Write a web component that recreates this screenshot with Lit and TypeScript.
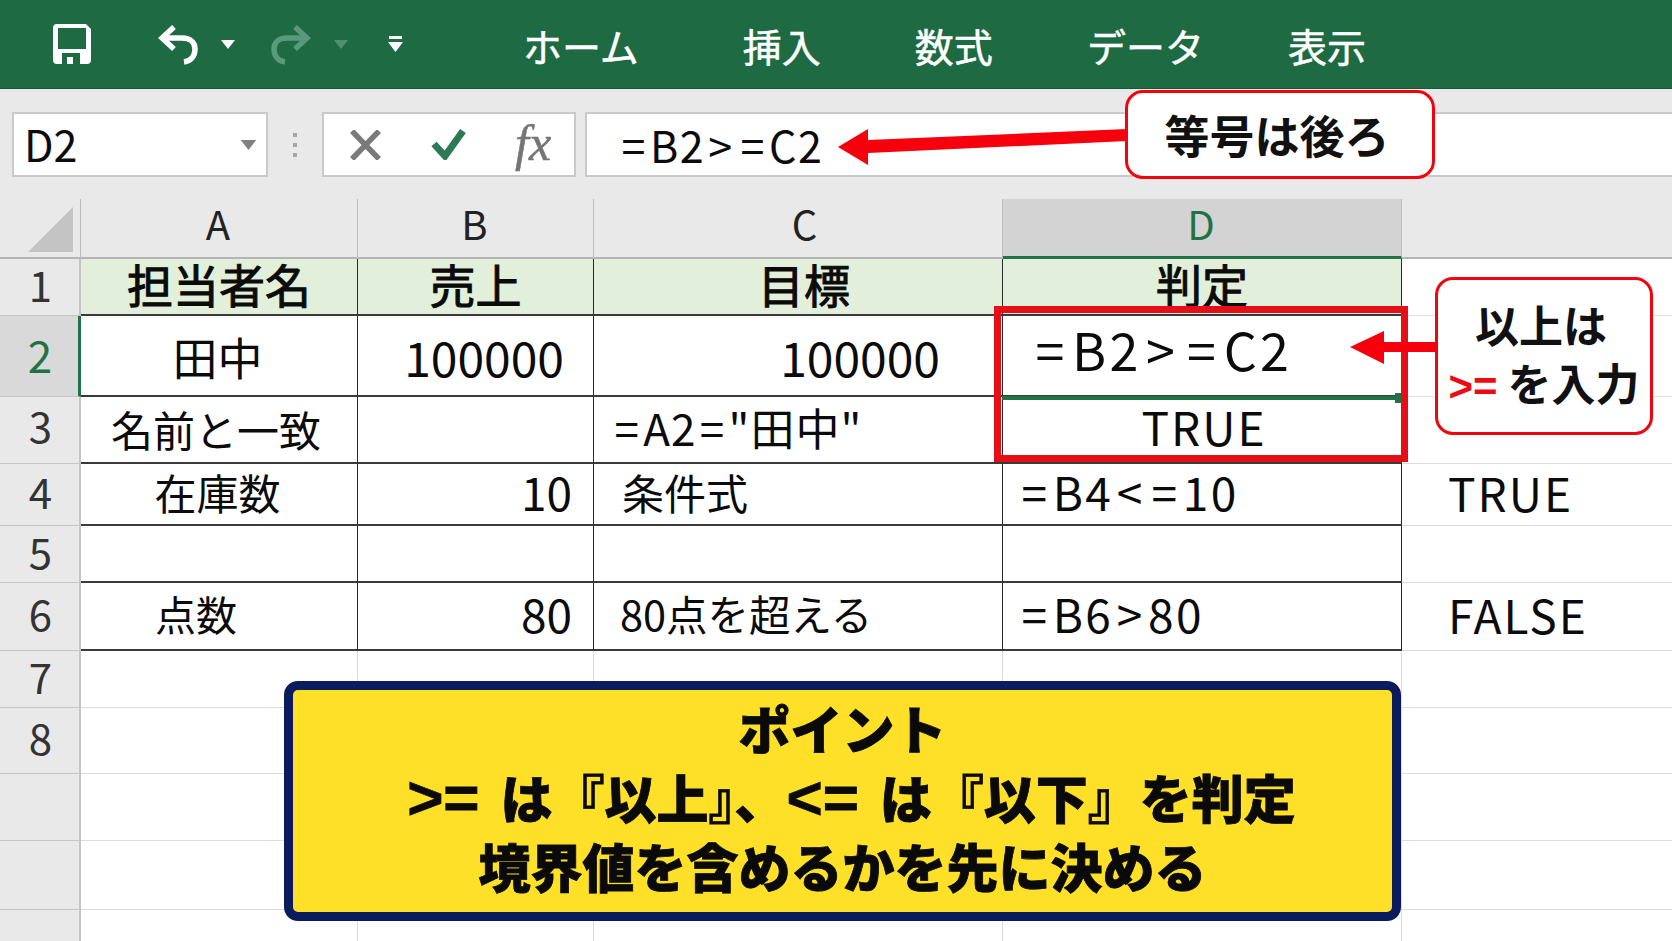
import { LitElement, html, css, svg } from "lit";
import { customElement } from "lit/decorators.js";

type Cell = [string, string];

const ROWS: { n: string; h: string; cells: Cell[] }[] = [
  { n: "1", h: "r1", cells: [["担当者名", "hd c"], ["売上", "hd c"], ["目標", "hd c shift"], ["判定", "hd c"], ["", "e"]] },
  { n: "2", h: "r2 act", cells: [["田中", "c s45 shiftl low"], ["100000", "r s48 pr30"], ["100000", "r s48 pr64"], ["", "d"], ["", "e"]] },
  { n: "3", h: "r3", cells: [["名前と一致", "c s42 shiftl2"], ["", "d"], ['=A2="田中"', "l s44 pl18 sp up"], ["TRUE", "c s46 sp2 shift2 up2"], ["", "e"]] },
  { n: "4", h: "r4", cells: [["在庫数", "c s42 shiftl up"], ["10", "r s46 pr22 up"], ["条件式", "l s42 pl28 up"], ["=B4<=10", "l s46 pl16 sp3 up"], ["TRUE", "l s46 pl46 sp2 e up"]] },
  { n: "5", h: "r5", cells: [["", "d"], ["", "d"], ["", "d"], ["", "d"], ["", "e"]] },
  { n: "6", h: "r6", cells: [["点数", "l s41 pl74 up"], ["80", "r s46 pr22 up"], ["80点を超える", "l s415 pl26 up"], ["=B6>80", "l s46 pl16 sp3 up"], ["FALSE", "l s46 pl46 sp2 e up"]] },
];

const formula = (t: string) =>
  t.split(/([=<>])/).map((p) => (/^[=<>]$/.test(p) ? html`<span class="sym">${p}</span>` : p));

@customElement("app-root")
export class AppRoot extends LitElement {
  static styles = css`
    :host { display: block; width: 1672px; height: 941px; position: relative; overflow: hidden; background: #fff; color: #0b0b0b;
      font-family: "Noto Sans CJK JP", "Noto Sans", sans-serif; }
    .page { display: flex; flex-direction: column; height: 941px; }

    .ribbon { height: 89px; flex: none; box-sizing: border-box; background: #1e6a42; border-bottom: 1px solid #17573a; display: flex; align-items: center; color: #fff; padding-left: 53px; }
    .qat { display: flex; align-items: center; width: 470px; flex: none; }
    .qat svg { display: block; flex: none; }
    .undo { margin-left: 67px; margin-top: 2px; } .t1 { margin-left: 21px; } .redo { margin-left: 34px; margin-top: 2px; } .t2 { margin-left: 23px; } .cust { margin-left: 40px; }
    .tabs { display: flex; font-size: 39px; line-height: 50px; align-items: center; gap: 94px; -webkit-text-stroke: 0.5px #fff; margin-top: 1px; }
    .tabs span:first-child { margin-right: 10px; } .tabs span:nth-child(4) { margin-right: -10px; }

    .fbar { height: 110px; flex: none; box-sizing: border-box; background: #e9e9e9; display: flex; padding: 23px 0 0 12px; }
    .box { height: 65px; box-sizing: border-box; background: #fff; border: 2px solid #c9c9c9; display: flex; align-items: center; }
    .name { width: 256px; padding: 0 9px 0 10px; justify-content: space-between; font-size: 43px; }
    .name span { margin-top: -4px; }
    .dots { width: 54px; flex: none; display: flex; justify-content: center; align-items: center; height: 65px; }
    .fn { width: 254px; padding-left: 25px; }
    .fn .x { margin-right: 49px; } .fn .v { margin-right: 49px; }
    .fx { font-family: "Liberation Serif", serif; font-style: italic; font-size: 50px; color: #757575; line-height: 60px; margin-top: -4px; -webkit-text-stroke: 0.5px #757575; }
    .formula { flex: 1; margin-left: 9px; border-right: 0; padding-left: 31px; font-size: 43px; letter-spacing: 1.4px; }
    .sym { margin: 0 3.4px; }
    .fline { margin-top: -2px; }

    .sheet { flex: 1; display: grid; background: #fff;
      grid-template-columns: 81px 277px 236px 409px 399px 270px;
      grid-template-rows: 60px 57px 81px 67px 62px 57px 68px 57px 66px 67px 69px 1fr; }
    .ch, .rh { background: #e9e9e9; color: #222; display: flex; align-items: center; justify-content: center; box-sizing: border-box; }
    .corner { background: #e9e9e9; border-right: 1px solid #bbb; border-bottom: 2px solid #b5b5b5; }
    .corner svg { display: block; margin: 8px 0 0 28px; }
    .ch { font-size: 40px; border-right: 1px solid #bdbdbd; border-bottom: 2px solid #b5b5b5; line-height: 1; padding-bottom: 10px; padding-right: 2px; }
    .ch.on { background: #d3d3d3; color: #217346; border-bottom: 3px solid #217346; }
    .ch.c3 { padding-left: 13px; padding-right: 0; }
    .ch.last { border-right: 0; }
    .rh { font-size: 42px; line-height: 1.2; border-right: 2px solid #c4c4c4; border-bottom: 1px solid #c6c6c6; color: #333; padding-bottom: 6px; padding-left: 2px; }
    .rh.r3 { padding-bottom: 10px; }
    .rh.act { background: #d9d9d9; color: #217346; border-right: 3px solid #217346; font-size: 44px; padding-bottom: 4px; }
    .cell { box-sizing: border-box; border-right: 1px solid #2b2b2b; border-bottom: 2px solid #3a3a3a; display: flex; align-items: center; white-space: pre; line-height: 1.2; }
    .cell.c { justify-content: center; } .cell.r { justify-content: flex-end; } .cell.l { justify-content: flex-start; }
    .hd { background: #e2efda; font-size: 46px; -webkit-text-stroke: 1px #0b0b0b; padding-bottom: 5px; }
    .cell.e { border-right: 0; border-bottom: 1px solid #dedede; }
    .s41 { font-size: 41px; } .s415 { font-size: 41.5px; } .s42 { font-size: 42px; } .s44 { font-size: 44px; } .s45 { font-size: 45px; } .s46 { font-size: 46px; } .s48 { font-size: 48px; padding-top: 2px; }
    .low { padding-top: 3px; }
    .up { padding-bottom: 4px; } .up2 { padding-bottom: 6px; }
    .cell.shift { padding-left: 12px; } .cell.shift2 { padding-left: 4px; } .cell.shiftl { padding-right: 3px; } .cell.shiftl2 { padding-right: 6px; }
    .pr30 { padding-right: 29px; } .pr64 { padding-right: 62px; } .pr22 { padding-right: 21px; }
    .pl16 { padding-left: 15px; } .pl18 { padding-left: 17px; } .pl28 { padding-left: 28px; } .pl26 { padding-left: 26px; } .pl46 { padding-left: 46px; } .pl74 { padding-left: 74px; }
    .sp { letter-spacing: 1px; } .sp2 { letter-spacing: 2px; } .sp3 { letter-spacing: 2.4px; }
    .blank { box-sizing: border-box; border-right: 1px solid #dcdcdc; border-bottom: 1px solid #dcdcdc; }
    .blank.last { border-right: 0; }
    .blank.end, .rh.end { border-bottom: 0; }

    .overlay { position: absolute; left: 0; top: 0; pointer-events: none; }
    .selbox { position: absolute; left: 994px; top: 306px; width: 414px; height: 156px; box-sizing: border-box; border: 7px solid #e60f17; }
    .selline { position: absolute; left: 1002px; top: 396px; width: 396px; height: 4px; background: #217346; }
    .handle { position: absolute; left: 1395px; top: 393px; width: 7px; height: 10px; background: #217346; }
    .d2 { position: absolute; left: 1031px; top: 316px; font-size: 52px; line-height: 66px; letter-spacing: 3.2px; }
    .d2 .sym { margin: 0 4.5px; }
    .callout { position: absolute; box-sizing: border-box; background: #fff; border: 3px solid #f0050f; border-radius: 18px; font-weight: 700; display: flex; flex-direction: column; align-items: center; justify-content: center; color: #111; }
    .c1 { left: 1125px; top: 90px; width: 310px; height: 89px; font-size: 45px; padding-right: 6px; }
    .c2 { left: 1435px; top: 277px; width: 218px; height: 158px; font-size: 44px; line-height: 58px; padding-bottom: 2px; }
    .c2 div:first-child { padding-right: 6px; }
    .c2 div:last-child { padding-left: 0; }
    .red { color: #ee0a12; font-family: "Liberation Sans", sans-serif; font-size: 42px; }
    .point { position: absolute; left: 284px; top: 681px; width: 1117px; height: 240px; box-sizing: border-box; background: #fde027; border: 9px solid #0a1c5e; border-radius: 14px; font-weight: 900; color: #0a0a0a; text-align: center; font-size: 52px; display: flex; flex-direction: column; justify-content: center; padding-bottom: 10px; -webkit-text-stroke: 0.8px #0a0a0a; }
    .point div { height: 69px; line-height: 69px; white-space: nowrap; }
    .point .line2 { padding-left: 18px; }
    .point .ascii { font-family: "Liberation Sans", sans-serif; font-weight: 700; font-size: 62px; line-height: 0; margin-right: 9px; }
  `;

  private tri(color: string, w = 14, h = 9) {
    return html`<svg width=${w} height=${h} viewBox="0 0 14 9"><path d="M0 0H14L7 9Z" fill=${color}></path></svg>`;
  }

  render() {
    const cols = ["A", "B", "C", "D"];
    const blanks = ["7", "8", "", "", ""];
    return html`
      <div class="page">
        <div class="ribbon">
          <div class="qat">
            <svg width="38" height="40" viewBox="0 0 38 40">
              <path fill="#fff" fill-rule="evenodd" d="M4 0H33L38 5V36Q38 40 34 40H4Q0 40 0 36V4Q0 0 4 0ZM5 4V25H33V4ZM9 29V40H14V33H20V40H27V29Z"></path>
            </svg>
            <svg class="undo" width="42" height="40" viewBox="0 0 42 40" fill="none" stroke="#fff" stroke-width="5.5">
              <path d="M16 2L4 13L16 24"></path>
              <path d="M5 13H24C33 13 37 18 37 24C37 31 33 36 26 37"></path>
            </svg>
            <span class="t1">${this.tri("#fff")}</span>
            <svg class="redo" width="42" height="40" viewBox="0 0 42 40" fill="none" stroke="#5a9a7c" stroke-width="5.5">
              <path d="M26 2L38 13L26 24"></path>
              <path d="M37 13H18C9 13 5 18 5 24C5 31 9 36 16 37"></path>
            </svg>
            <span class="t2">${this.tri("#4f9072")}</span>
            <svg class="cust" width="15" height="16" viewBox="0 0 15 16">
              <path d="M1 0H14V3H1Z M0 6H15L7.5 16Z" fill="#fff"></path>
            </svg>
          </div>
          <div class="tabs"><span>ホーム</span><span>挿入</span><span>数式</span><span>データ</span><span>表示</span></div>
        </div>

        <div class="fbar">
          <div class="box name"><span>D2</span>${this.tri("#808080", 17, 10)}</div>
          <div class="dots">
            <svg width="4" height="24" viewBox="0 0 4 24"><path d="M0 0h4v4H0zM0 10h4v4H0zM0 20h4v4H0z" fill="#a6a6a6"></path></svg>
          </div>
          <div class="box fn">
            <svg class="x" width="33" height="30" viewBox="0 0 33 30" fill="none" stroke="#7a7a7a" stroke-width="5.5"><path d="M3 1L30 29M30 1L3 29"></path></svg>
            <svg class="v" width="35" height="31" viewBox="0 0 35 31" fill="none" stroke="#2c7a55" stroke-width="7"><path d="M3 15L14 27L32 2"></path></svg>
            <span class="fx">fx</span>
          </div>
          <div class="box formula"><div class="fline">${formula("=B2>=C2")}</div></div>
        </div>

        <div class="sheet">
          <div class="corner"><svg width="45" height="45" viewBox="0 0 45 45"><path d="M45 0V45H0Z" fill="#c4c4c4"></path></svg></div>
          ${cols.map((c) => html`<div class="ch ${c === "D" ? "on" : ""} ${c === "C" ? "c3" : ""}">${c}</div>`)}
          <div class="ch last"></div>
          ${ROWS.map(
            (r) => html`
              <div class="rh ${r.h}">${r.n}</div>
              ${r.cells.map(([t, k]) => html`<div class="cell ${k}">${/^=/.test(t) ? html`<span>${formula(t)}</span>` : t}</div>`)}
            `
          )}
          ${blanks.map((n, i) => {
            const end = i === blanks.length - 1 ? "end" : "";
            return html`
              <div class="rh ${end}">${n}</div>
              <div class="blank ${end}"></div><div class="blank ${end}"></div><div class="blank ${end}"></div><div class="blank ${end}"></div><div class="blank last ${end}"></div>
            `;
          })}
        </div>
      </div>

      <div class="selline"></div>
      <div class="handle"></div>
      <div class="d2">${formula("=B2>=C2")}</div>
      <div class="selbox"></div>

      <svg class="overlay" width="1672" height="941">
        ${svg`<path d="M1127 129L868 140V129L838 147L868 165V153L1127 141Z" fill="#f5000c"></path>
        <path d="M1437 342H1384V331L1350 347L1384 364V352H1437Z" fill="#f5000c"></path>`}
      </svg>

      <div class="callout c1">等号は後ろ</div>
      <div class="callout c2">
        <div>以上は</div>
        <div><span class="red">&gt;=</span> を入力</div>
      </div>

      <div class="point">
        <div>ポイント</div>
        <div class="line2"><span class="ascii">&gt;=</span> は『以上』、<span class="ascii">&lt;=</span> は『以下』を判定</div>
        <div>境界値を含めるかを先に決める</div>
      </div>
    `;
  }
}
